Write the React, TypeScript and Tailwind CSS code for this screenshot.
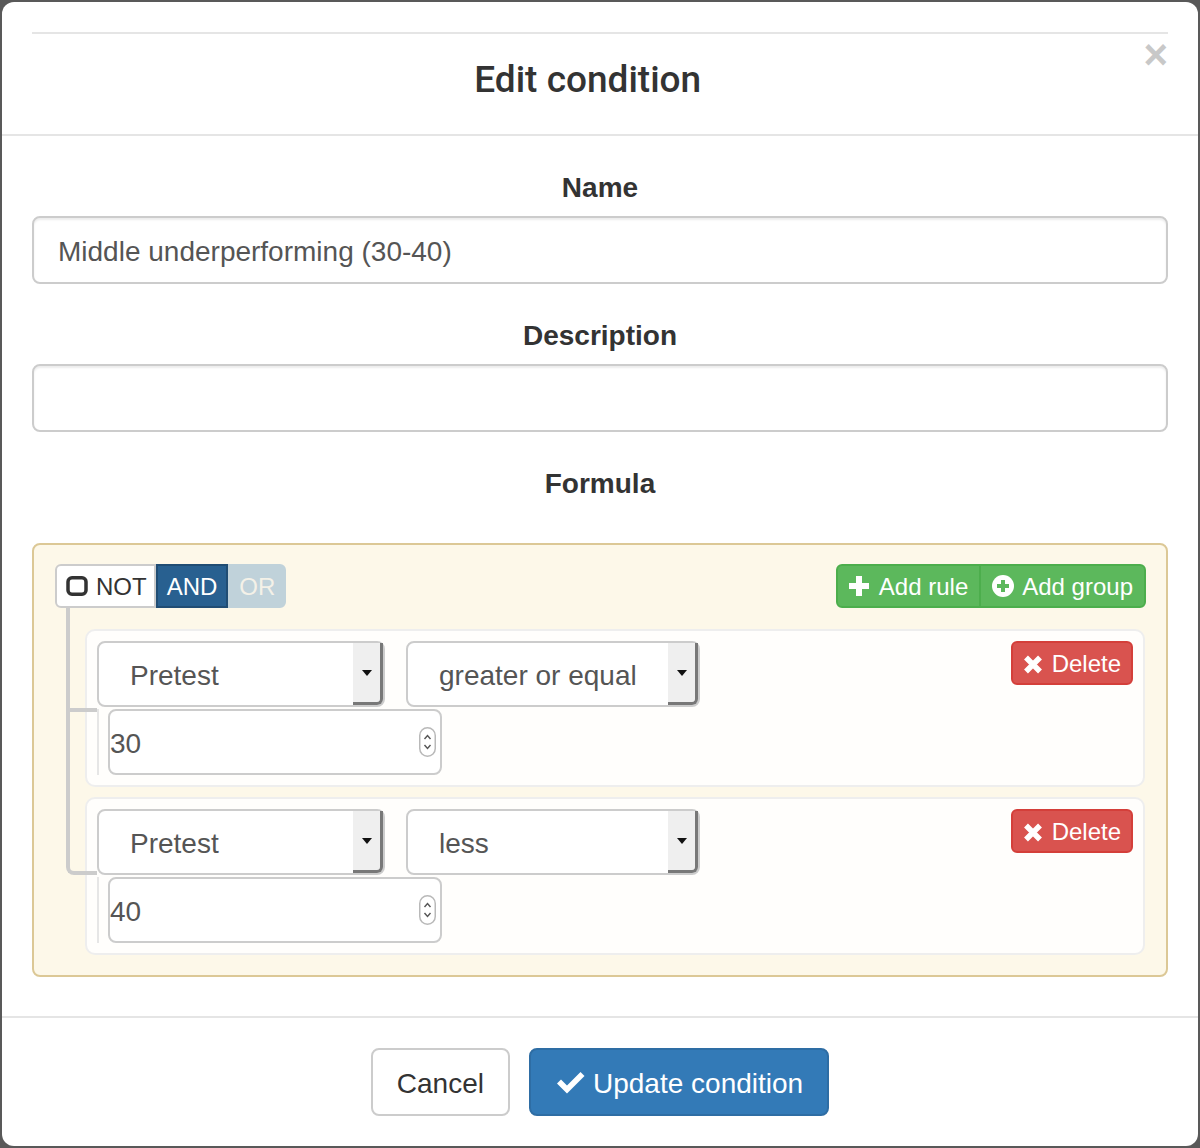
import React from "react";

const FONT = { fontFamily: '"Liberation Sans", Arial, Helvetica, sans-serif' };

function Caret() {
  return (
    <svg width="10" height="6" viewBox="0 0 10 6">
      <polygon points="0,0 10,0 5,6" fill="#111" />
    </svg>
  );
}

function Spinner() {
  return (
    <svg width="17" height="30" viewBox="0 0 17 30">
      <rect x="0.75" y="0.75" width="15.5" height="28.5" rx="7.75" fill="#fff" stroke="#b9b9b9" strokeWidth="1.5" />
      <path d="M5.5 12 L8.5 8.5 L11.5 12" fill="none" stroke="#555" strokeWidth="1.4" />
      <path d="M5.5 18 L8.5 21.5 L11.5 18" fill="none" stroke="#555" strokeWidth="1.4" />
    </svg>
  );
}

function Select({ label, w }: { label: string; w: string }) {
  return (
    <div className={`${w} flex h-[66px] items-stretch rounded-[8px] border-2 border-[#cccccc] bg-white`}>
      <div className="flex flex-1 items-center pl-[31px] pt-[3px] text-[28px] text-[#555555]">{label}</div>
      <div className="flex w-[30px] items-center justify-center rounded-br-[6px] border-b-[3px] border-r-[3px] border-[#787878] bg-[#efefef]">
        <Caret />
      </div>
    </div>
  );
}

function XIcon() {
  return (
    <svg width="20" height="19" viewBox="0 0 20 19">
      <path d="M3 2.5 L17 16.5 M17 2.5 L3 16.5" stroke="#fff" strokeWidth="5.5" strokeLinecap="butt" />
    </svg>
  );
}

function Rule({ op, value }: { op: string; value: string }) {
  return (
    <div className="rounded-[10px] border-2 border-[#eeeeee] bg-[#fffefc] p-[10px]">
      <div className="flex items-start">
        <Select label="Pretest" w="w-[288px]" />
        <div className="ml-[21px]">
          <Select label={op} w="w-[294px]" />
        </div>
        <button className="ml-auto flex h-[44px] items-center gap-[9px] rounded-[6px] border-2 border-[#d43f3a] bg-[#d9534f] px-[10px] pt-[2px] text-[24px] text-white">
          <XIcon />
          <span>Delete</span>
        </button>
      </div>
      <div className="mt-[2px] flex">
        <div className="w-[2px] bg-[#e6e6e6]" />
        <div className="ml-[9px] flex h-[66px] w-[334px] items-center rounded-[8px] border-2 border-[#cccccc] bg-white pr-[4px] text-[28px] text-[#555555]">
          <span className="flex-1 pt-[3px]">{value}</span>
          <Spinner />
        </div>
      </div>
    </div>
  );
}

const labelCls = "mb-[8px] block pt-[4px] text-center text-[28px] font-bold leading-[40px] text-[#333333]";

export default function App() {
  return (
    <div className="min-h-[1148px] bg-[#595959] p-[2px]" style={FONT}>
      <div className="h-[1144px] w-[1196px] overflow-hidden rounded-[12px] bg-white">
        {/* header */}
        <div className="border-b-2 border-[#e5e5e5] px-[30px] pb-[29px] pt-[30px]">
          <div className="h-[2px] bg-[#e5e5e5]" />
          <div className="flex items-start">
            <h4
              className="mt-[21px] flex-1 text-center text-[37px] font-medium leading-[50px] text-[#333333]"
              style={{ fontFamily: 'Roboto, "Liberation Sans", Arial, sans-serif' }}
            >
              Edit condition
            </h4>
            <button className="text-[42px] font-bold leading-[42px] text-[#c8c8c8]">×</button>
          </div>
        </div>

        {/* body */}
        <div className="px-[30px] pb-[39px] pt-[28px]">
          <div className="mb-[28px]">
            <label className={labelCls}>Name</label>
            <div className="flex h-[68px] items-center rounded-[8px] border-2 border-[#cccccc] px-[24px] pt-[3px] text-[28px] text-[#555555] shadow-[inset_0_2px_2px_rgba(0,0,0,0.075)]">
              Middle underperforming (30-40)
            </div>
          </div>
          <div className="mb-[28px]">
            <label className={labelCls}>Description</label>
            <div className="h-[68px] rounded-[8px] border-2 border-[#cccccc] shadow-[inset_0_2px_2px_rgba(0,0,0,0.075)]" />
          </div>
          <label className={labelCls}>Formula</label>

          <div className="mt-[39px] rounded-[8px] border-2 border-[#dcc896] bg-[#fdf8e9] pb-[20px] pl-[21px] pr-[20px] pt-[19px]">
            {/* group header */}
            <div className="flex h-[44px] items-start justify-between">
              <div className="flex h-[44px] text-[24px]">
                <button className="flex h-[44px] items-center gap-[8px] rounded-l-[6px] border-2 border-[#cccccc] bg-white pl-[9px] pr-[7px] pt-[2px] text-[#333333]">
                  <svg width="22" height="20" viewBox="0 0 22 20" className="-mt-[2px]">
                    <rect x="2" y="1.75" width="18" height="16.5" rx="4" fill="none" stroke="#333" strokeWidth="3.5" />
                  </svg>
                  <span>NOT</span>
                </button>
                <button className="flex h-[44px] items-center border-2 border-[#204d74] bg-[#286090] px-[9px] pt-[2px] text-white">AND</button>
                <button className="flex h-[44px] items-center rounded-r-[6px] border-2 border-[#c0d2da] bg-[#c0d2da] px-[9px] pt-[2px] text-[#f4f1e8]">OR</button>
              </div>
              <div className="flex h-[44px] text-[24px] text-white">
                <button className="flex h-[44px] items-center gap-[10px] rounded-l-[6px] border-2 border-[#4cae4c] bg-[#5cb85c] pl-[11px] pr-[11px] pt-[2px]">
                  <svg width="20" height="20" viewBox="0 0 20 20" className="-mt-[2px]">
                    <path d="M7 0 H13 V7 H20 V13 H13 V20 H7 V13 H0 V7 H7 Z" fill="#fff" />
                  </svg>
                  <span>Add rule</span>
                </button>
                <button className="-ml-[2px] flex h-[44px] items-center gap-[8px] rounded-r-[6px] border-2 border-[#4cae4c] bg-[#5cb85c] pl-[11px] pr-[11px] pt-[2px]">
                  <svg width="22" height="22" viewBox="0 0 22 22" className="-mt-[2px]">
                    <circle cx="11" cy="11" r="11" fill="#fff" />
                    <path d="M9 5 H13 V9 H17 V13 H13 V17 H9 V13 H5 V9 H9 Z" fill="#5cb85c" />
                  </svg>
                  <span>Add group</span>
                </button>
              </div>
            </div>

            {/* rules */}
            <div className="relative pl-[30px] pr-[1px] pt-[21px]">
              <div className="absolute left-[11px] top-0 z-10 h-[104px] w-[31px] border-b-4 border-l-4 border-[#cccccc]" />
              <div className="absolute left-[11px] top-[104px] z-10 h-[163px] w-[31px] rounded-bl-[8px] border-b-4 border-l-4 border-[#cccccc]" />
              <Rule op="greater or equal" value="30" />
              <div className="mt-[10px]">
                <Rule op="less" value="40" />
              </div>
            </div>
          </div>
        </div>

        {/* footer */}
        <div className="flex justify-center gap-[19px] border-t-2 border-[#e5e5e5] pt-[30px]">
          <button className="flex h-[68px] items-center rounded-[8px] border-2 border-[#cccccc] bg-white px-[24px] pt-[3px] text-[28px] text-[#333333]">
            Cancel
          </button>
          <button className="flex h-[68px] items-center gap-[8px] rounded-[8px] border-2 border-[#2e6da4] bg-[#337ab7] pl-[26px] pr-[24px] pt-[3px] text-[28px] text-white">
            <svg width="28" height="24" viewBox="0 0 28 24" className="-mt-[3px]">
              <polygon points="0,13.5 4,9.5 10,15.5 23.5,2 27.5,6 10,23.5" fill="#fff" />
            </svg>
            <span>Update condition</span>
          </button>
        </div>
      </div>
    </div>
  );
}
